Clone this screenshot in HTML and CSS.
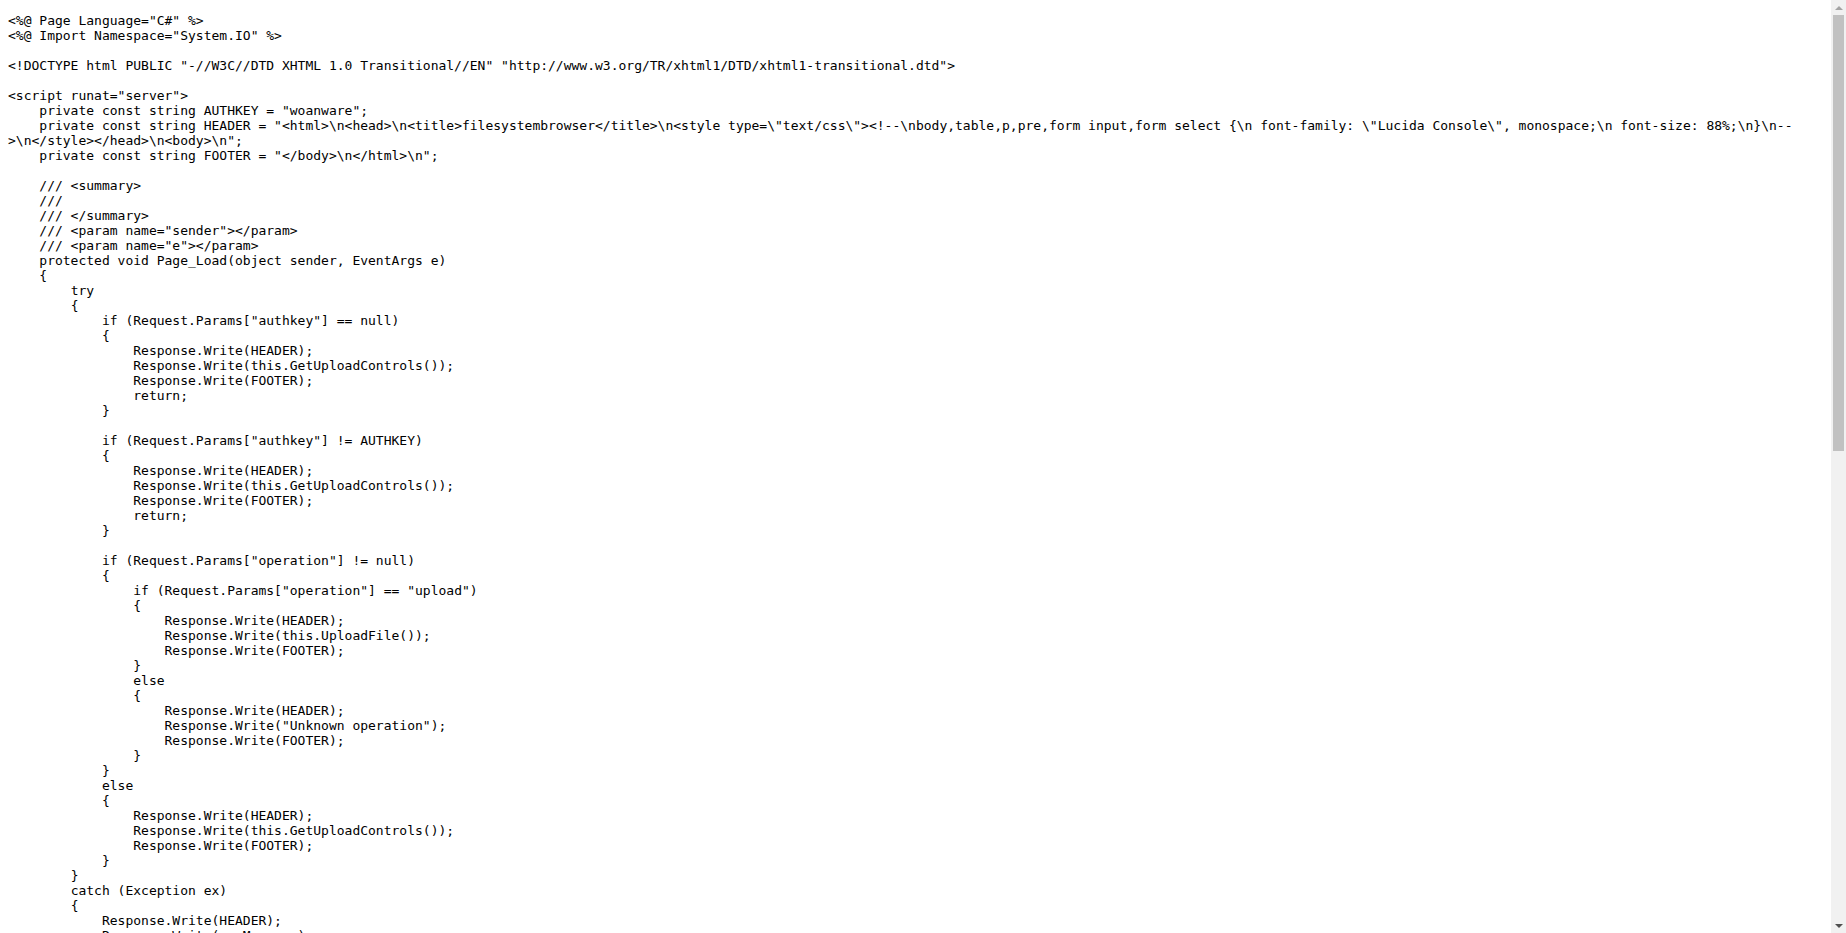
FILE: index.html
```
<!DOCTYPE html>
<html>
  <head>
    <meta charset="utf-8"/>
    <link rel="stylesheet" href="styles.css">
  </head>
  <body>
    <div class="page">
<pre class="source">&lt;%@ Page Language="C#" %&gt;
&lt;%@ Import Namespace="System.IO" %&gt;

&lt;!DOCTYPE html PUBLIC "-//W3C//DTD XHTML 1.0 Transitional//EN" "http://www.w3.org/TR/xhtml1/DTD/xhtml1-transitional.dtd"&gt;

&lt;script runat="server"&gt;
    private const string AUTHKEY = "woanware";
    private const string HEADER = "&lt;html&gt;\n&lt;head&gt;\n&lt;title&gt;filesystembrowser&lt;/title&gt;\n&lt;style type=\"text/css\"&gt;&lt;!--\nbody,table,p,pre,form input,form select {\n font-family: \"Lucida Console\", monospace;\n font-size: 88%;\n}\n--&gt;\n&lt;/style&gt;&lt;/head&gt;\n&lt;body&gt;\n";
    private const string FOOTER = "&lt;/body&gt;\n&lt;/html&gt;\n";

    /// &lt;summary&gt;
    ///
    /// &lt;/summary&gt;
    /// &lt;param name="sender"&gt;&lt;/param&gt;
    /// &lt;param name="e"&gt;&lt;/param&gt;
    protected void Page_Load(object sender, EventArgs e)
    {
        try
        {
            if (Request.Params["authkey"] == null)
            {
                Response.Write(HEADER);
                Response.Write(this.GetUploadControls());
                Response.Write(FOOTER);
                return;
            }

            if (Request.Params["authkey"] != AUTHKEY)
            {
                Response.Write(HEADER);
                Response.Write(this.GetUploadControls());
                Response.Write(FOOTER);
                return;
            }

            if (Request.Params["operation"] != null)
            {
                if (Request.Params["operation"] == "upload")
                {
                    Response.Write(HEADER);
                    Response.Write(this.UploadFile());
                    Response.Write(FOOTER);
                }
                else
                {
                    Response.Write(HEADER);
                    Response.Write("Unknown operation");
                    Response.Write(FOOTER);
                }
            }
            else
            {
                Response.Write(HEADER);
                Response.Write(this.GetUploadControls());
                Response.Write(FOOTER);
            }
        }
        catch (Exception ex)
        {
            Response.Write(HEADER);
            Response.Write(ex.Message);
            Response.Write(FOOTER);
        }
    }

    /// &lt;summary&gt;
    ///
    /// &lt;/summary&gt;
    /// &lt;returns&gt;&lt;/returns&gt;
    private string GetUploadControls()
    {
        string temp = string.Empty;

        temp = "&lt;form enctype=\"multipart/form-data\" action=\"?operation=upload\" method=\"post\"&gt;";
        temp += "&lt;br&gt;Auth Key: &lt;input type=\"text\" name=\"authKey\"&gt;&lt;br&gt;";
        temp += "&lt;br&gt;Please specify a file: &lt;input type=\"file\" name=\"file\"&gt;&lt;/br&gt;";
        temp += "&lt;div&gt;&lt;input type=\"submit\" value=\"Send\"&gt;&lt;/div&gt;";
        temp += "&lt;/form&gt;";

        return temp;
    }

    /// &lt;summary&gt;
    ///
    /// &lt;/summary&gt;
    /// &lt;returns&gt;&lt;/returns&gt;
    private string UploadFile()
    {
        string temp = string.Empty;

        if (Request.Params["authkey"] == null)
        {
            return string.Empty;
        }

        if (Request.Params["authkey"] != AUTHKEY)
        {
            return string.Empty;
        }

        if (Request.Files.Count != 1)
        {
            return "No file selected";
        }

        HttpPostedFile httpPostedFile = Request.Files[0];

        int fileLength = httpPostedFile.ContentLength;
        byte[] buffer = new byte[fileLength];
        httpPostedFile.InputStream.Read(buffer, 0, fileLength);

        FileInfo fileInfo = new FileInfo(Request.PhysicalPath);
        using (FileStream fileStream = new FileStream(Path.Combine(fileInfo.DirectoryName, Path.GetFileName(httpPostedFile.FileName)), FileMode.Create))
        {
            fileStream.Write(buffer, 0, buffer.Length);
        }

        return "File uploaded";
    }
&lt;/script&gt;
</pre>
    </div>

    <div class="scrollbar">
      <div class="scrollbar-arrow scrollbar-arrow--up"></div>
      <div class="scrollbar-track">
        <div class="scrollbar-thumb"></div>
      </div>
      <div class="scrollbar-arrow scrollbar-arrow--down"></div>
    </div>
  </body>
</html>
```

FILE: styles.css
```
html,
body {
  height: 100%;
}

body {
  display: flex;
  margin: 0;

  overflow: hidden;

  background-color: #fff;
  color: #000;
}

.page {
  flex: 1;
  padding: 13px 8px;

  overflow: hidden;
}

.source {
  margin: 0;

  font-family: "DejaVu Sans Mono", monospace;
  font-size: 13px;
  line-height: 15px;

  white-space: pre-wrap;
  word-wrap: break-word;
}

.scrollbar {
  display: flex;
  flex-direction: column;
  width: 15px;

  background-color: #f1f1f1;
}

.scrollbar-arrow {
  display: flex;
  justify-content: center;
  align-items: center;
  height: 15px;
}

.scrollbar-arrow::before {
  content: "";
  width: 0;
  height: 0;

  border-left: 4px solid transparent;
  border-right: 4px solid transparent;
}

.scrollbar-arrow--up::before {
  border-bottom: 4px solid #a3a3a3;
}

.scrollbar-arrow--down::before {
  border-top: 4px solid #505050;
}

.scrollbar-track {
  flex: 1;
}

.scrollbar-thumb {
  height: 436px;
  margin: 0 2px;

  background-color: #c1c1c1;
}
```
